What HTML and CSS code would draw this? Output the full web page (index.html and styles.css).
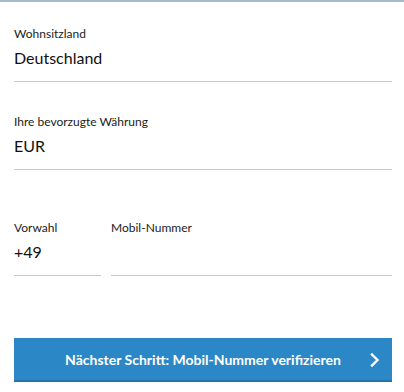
FILE: index.html
```html
<!DOCTYPE html>
<html lang="de">
<head>
  <meta charset="UTF-8" />
  <meta name="viewport" content="width=device-width, initial-scale=1.0" />
  <title>Registrierung</title>
  <link rel="stylesheet" href="styles.css">
</head>
<body>
  <form class="signup">
    <div class="field">
      <label>Wohnsitzland</label>
      <div class="value">Deutschland</div>
    </div>

    <div class="field">
      <label>Ihre bevorzugte Währung</label>
      <div class="value">EUR</div>
    </div>

    <div class="phone">
      <div class="field prefix">
        <label>Vorwahl</label>
        <div class="value">+49</div>
      </div>
      <div class="field number">
        <label>Mobil-Nummer</label>
        <div class="value"></div>
      </div>
    </div>

    <button type="button" class="next">
      <span>Nächster Schritt: Mobil-Nummer verifizieren</span>
      <svg class="chevron" width="10" height="14" viewBox="0 0 10 14">
        <path d="M2 1.5 L7.5 7 L2 12.5" fill="none" stroke="#fff" stroke-width="2.4" stroke-linecap="square"/>
      </svg>
    </button>
  </form>
</body>
</html>
```

FILE: styles.css
```css
* { box-sizing: border-box; }
html, body {
  margin: 0; padding: 0; background: #fff;
  font-family: 'Lato', 'Liberation Sans', sans-serif; color: #1a1a1a;
}
body { border-top: 2px solid #a3bccb; }
.signup {
  display: flex; flex-direction: column;
  padding: 25px 12px 0 14px;
}
.field {
  display: flex; flex-direction: column;
  border-bottom: 1px solid #c9c9c9;
  margin-bottom: 33px;
}
label {
  font-size: 12px; line-height: 14px; height: 14px;
  color: #222; margin-bottom: 7px;
}
.value {
  font-size: 16px; line-height: 20px; height: 20px;
  margin-bottom: 13px; color: #111;
}
.phone {
  display: flex; gap: 10px; padding-top: 18px;
}
.prefix { width: 87px; }
.number { flex: 1; }
.next {
  position: relative;
  display: flex; align-items: center; justify-content: center;
  height: 44px; margin-top: 29px; padding: 0;
  border: none; border-bottom: 2px solid #2375ad;
  background: #2b87c5; color: #fff;
  font-family: inherit; font-size: 14px; font-weight: bold;
  cursor: pointer;
}
.chevron { position: absolute; right: 12px; top: 15px; }
```
